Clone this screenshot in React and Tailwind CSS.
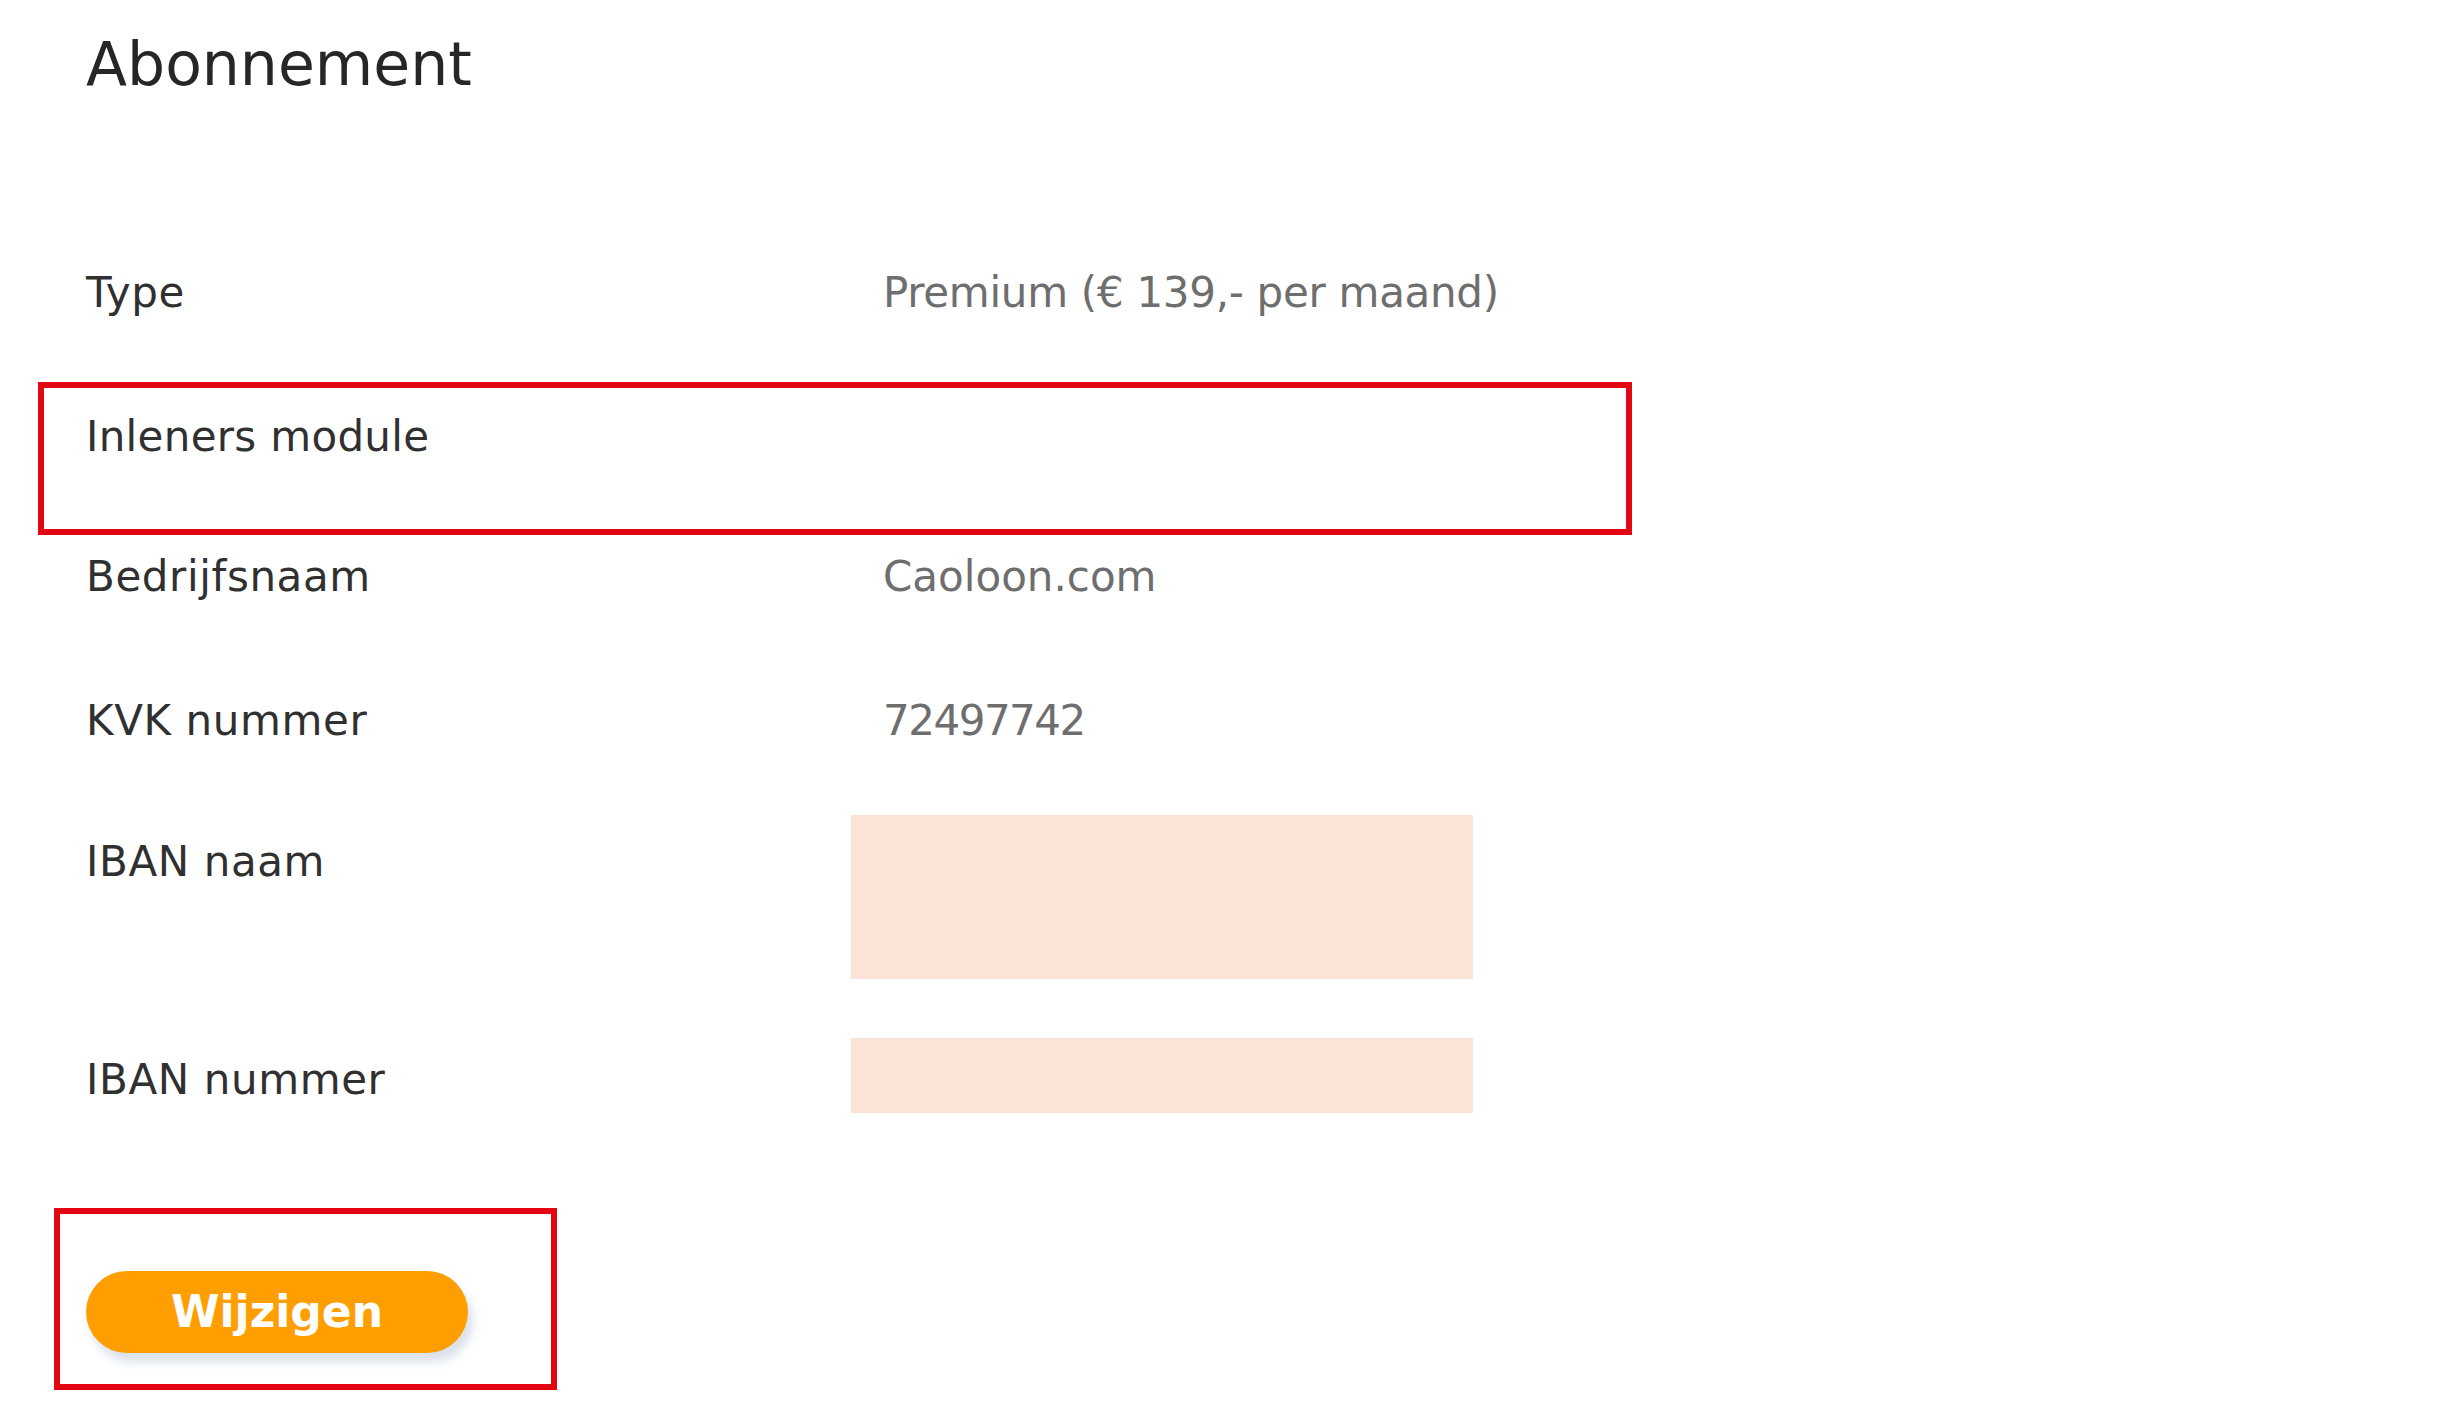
import React from "react";

const font = { fontFamily: '"DejaVu Sans", "Noto Sans", sans-serif' };

function Row({ label, value, valueClass = "", className = "", children }) {
  return (
    <div className={`flex ${className}`}>
      <div className="w-[797px] shrink-0 text-[42px] leading-[50px] tracking-[0.6px] text-[#303030]">{label}</div>
      {value !== undefined && (
        <div className={`text-[42px] leading-[50px] text-[#6e6e6e] ${valueClass}`}>{value}</div>
      )}
      {children}
    </div>
  );
}

export default function App() {
  return (
    <div className="min-h-[1409px] w-full bg-white pl-[86px] pt-[28px]" style={font}>
      <h1 className="h-[72px] text-[60px] leading-[72px] font-normal text-[#262626]">Abonnement</h1>

      <div className="mt-[168px] flex flex-col">
        <Row label="Type" value="Premium (€ 139,- per maand)" valueClass="tracking-[-0.3px]" className="h-[144px]" />

        <div className="relative h-[140px]">
          <div className="w-[797px] text-[42px] leading-[50px] tracking-[0.3px] text-[#303030]">Inleners module</div>
          <div className="pointer-events-none absolute left-[-48px] top-[-30px] h-[153px] w-[1594px] border-[6px] border-[#e30613]" />
        </div>

        <Row label="Bedrijfsnaam" value="Caoloon.com" className="h-[144px]" />
        <Row label="KVK nummer" value="72497742" valueClass="tracking-[-1.5px]" className="h-[141px]" />

        <Row label="IBAN naam" className="h-[218px]">
          <div className="-ml-[32px] -mt-[22px] h-[164px] w-[622px] bg-[#fbe3d7]" />
        </Row>

        <Row label="IBAN nummer" className="h-[58px]">
          <div className="-ml-[32px] -mt-[17px] h-[75px] w-[622px] bg-[#fbe3d7]" />
        </Row>

        <div className="relative mt-[158px] w-[382px]">
          <button
            type="button"
            className="flex h-[82px] w-[382px] items-center justify-center rounded-full bg-[#ff9e00] text-[44px] font-bold leading-none text-white shadow-[5px_9px_10px_rgba(90,120,160,0.22)]"
            style={font}
          >
            Wijzigen
          </button>
          <div className="pointer-events-none absolute left-[-32px] top-[-63px] h-[182px] w-[503px] border-[6px] border-[#e30613]" />
        </div>
      </div>
    </div>
  );
}
